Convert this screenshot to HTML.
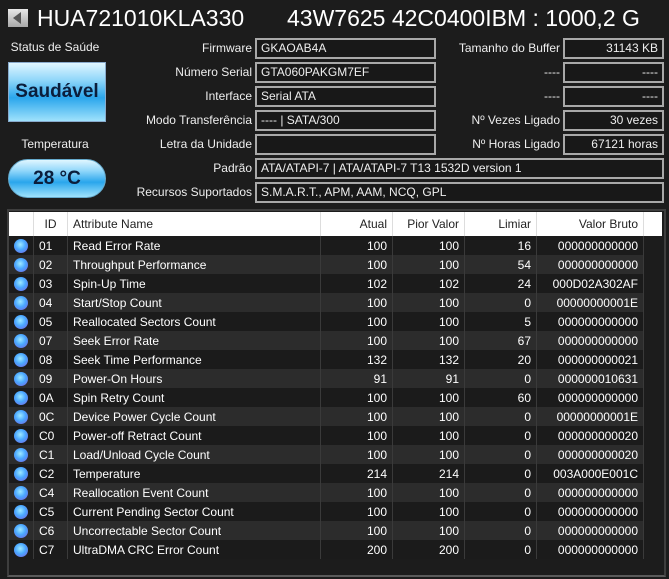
<!DOCTYPE html>
<html><head><meta charset="utf-8"><style>
*{margin:0;padding:0;box-sizing:border-box}
body{width:669px;height:579px;background:#1c1c1c;color:#fff;font-family:"Liberation Sans","DejaVu Sans",sans-serif;font-size:12px;position:relative;overflow:hidden}
.a{position:absolute;white-space:nowrap}
.lbl{position:absolute;text-align:right;color:#eee;font-size:12px}
.box{position:absolute;border:2px solid #a8a8a8;background:#181818;height:21px;line-height:17px;padding:0 4px;font-size:12px;color:#eee;white-space:nowrap}
.r{text-align:right}
table{position:absolute;left:9px;top:212px;border-collapse:collapse;font-size:12px}
td,th{height:19px;padding:0 5px;white-space:nowrap;border-right:1px solid #3a3a3a}
th{height:24px;background:#fff;color:#222;font-weight:normal;border-right:1px solid #ddd}
tr:nth-child(odd) td{background:#1b1b1b}
tr:nth-child(even) td{background:#2c2c2c}
.dot{display:inline-block;width:14px;height:14px;border-radius:50%;background:radial-gradient(circle at 45% 40%,#9ee9ff 0,#4aa8ff 45%,#7a5ce0 100%);vertical-align:middle}
</style></head><body>
<div class="a" style="left:8px;top:9px;width:20px;height:18px;background:linear-gradient(#e8e8e8,#a8a8a8)"></div>
<div class="a" style="left:13px;top:12px;width:0;height:0;border-top:6px solid transparent;border-bottom:6px solid transparent;border-right:8px solid #555"></div>
<div class="a" style="left:37px;top:5px;font-size:23px;color:#fff">HUA721010KLA330</div>
<div class="a" style="left:287px;top:5px;font-size:23px;color:#fff">43W7625 42C0400IBM : 1000,2 G</div>

<div class="a" style="left:0;width:110px;text-align:center;top:40px;color:#eee">Status de Saúde</div>
<div class="a" style="left:8px;top:62px;width:98px;height:60px;border:1px solid #8ac;background:linear-gradient(#e0f6ff 0%,#8fd6fa 30%,#2aa6ec 60%,#9fe2fc 100%);color:#0b1e3c;font-weight:bold;font-size:19px;text-align:center;line-height:58px">Saudável</div>
<div class="a" style="left:0;width:110px;text-align:center;top:137px;color:#eee">Temperatura</div>
<div class="a" style="left:8px;top:159px;width:98px;height:39px;border-radius:20px;border:1px solid #6ac;background:linear-gradient(#e0f6ff 0%,#8fd6fa 30%,#2aa6ec 60%,#9fe2fc 100%);color:#0b1e3c;font-weight:bold;font-size:19px;text-align:center;line-height:38px">28 °C</div>

<div class="lbl" style="left:100px;width:152px;top:41px">Firmware</div>
<div class="lbl" style="left:100px;width:152px;top:65px">Número Serial</div>
<div class="lbl" style="left:100px;width:152px;top:89px">Interface</div>
<div class="lbl" style="left:100px;width:152px;top:113px">Modo Transferência</div>
<div class="lbl" style="left:100px;width:152px;top:137px">Letra da Unidade</div>
<div class="lbl" style="left:100px;width:152px;top:161px">Padrão</div>
<div class="lbl" style="left:100px;width:152px;top:185px">Recursos Suportados</div>

<div class="box" style="left:255px;top:38px;width:181px">GKAOAB4A</div>
<div class="box" style="left:255px;top:62px;width:181px">GTA060PAKGM7EF</div>
<div class="box" style="left:255px;top:86px;width:181px">Serial ATA</div>
<div class="box" style="left:255px;top:110px;width:181px">---- | SATA/300</div>
<div class="box" style="left:255px;top:134px;width:181px"></div>
<div class="box" style="left:255px;top:158px;width:409px">ATA/ATAPI-7 | ATA/ATAPI-7 T13 1532D version 1</div>
<div class="box" style="left:255px;top:182px;width:409px">S.M.A.R.T., APM, AAM, NCQ, GPL</div>

<div class="lbl" style="left:430px;width:130px;top:41px">Tamanho do Buffer</div>
<div class="lbl" style="left:430px;width:130px;top:65px">----</div>
<div class="lbl" style="left:430px;width:130px;top:89px">----</div>
<div class="lbl" style="left:430px;width:130px;top:113px">Nº Vezes Ligado</div>
<div class="lbl" style="left:430px;width:130px;top:137px">Nº Horas Ligado</div>
<div class="box r" style="left:563px;top:38px;width:101px">31143 KB</div>
<div class="box r" style="left:563px;top:62px;width:101px">----</div>
<div class="box r" style="left:563px;top:86px;width:101px">----</div>
<div class="box r" style="left:563px;top:110px;width:101px">30 vezes</div>
<div class="box r" style="left:563px;top:134px;width:101px">67121 horas</div>

<div class="a" style="left:7px;top:209px;width:659px;height:368px;border:2px solid #3e3e3e;border-bottom-color:#5a5a5a"></div>
<div class="a" style="left:9px;top:212px;width:653px;height:24px;background:#fff"></div>
<table>
<tr><th style="width:24px"></th><th style="width:34px;text-align:center">ID</th><th style="width:253px;text-align:left">Attribute Name</th><th style="width:72px;text-align:right">Atual</th><th style="width:72px;text-align:right">Pior Valor</th><th style="width:72px;text-align:right">Limiar</th><th style="width:107px;text-align:right">Valor Bruto</th></tr>
<tbody>
<tr><td><span class="dot"></span></td><td>01</td><td>Read Error Rate</td><td class="r">100</td><td class="r">100</td><td class="r">16</td><td class="r">000000000000</td></tr>
<tr><td><span class="dot"></span></td><td>02</td><td>Throughput Performance</td><td class="r">100</td><td class="r">100</td><td class="r">54</td><td class="r">000000000000</td></tr>
<tr><td><span class="dot"></span></td><td>03</td><td>Spin-Up Time</td><td class="r">102</td><td class="r">102</td><td class="r">24</td><td class="r">000D02A302AF</td></tr>
<tr><td><span class="dot"></span></td><td>04</td><td>Start/Stop Count</td><td class="r">100</td><td class="r">100</td><td class="r">0</td><td class="r">00000000001E</td></tr>
<tr><td><span class="dot"></span></td><td>05</td><td>Reallocated Sectors Count</td><td class="r">100</td><td class="r">100</td><td class="r">5</td><td class="r">000000000000</td></tr>
<tr><td><span class="dot"></span></td><td>07</td><td>Seek Error Rate</td><td class="r">100</td><td class="r">100</td><td class="r">67</td><td class="r">000000000000</td></tr>
<tr><td><span class="dot"></span></td><td>08</td><td>Seek Time Performance</td><td class="r">132</td><td class="r">132</td><td class="r">20</td><td class="r">000000000021</td></tr>
<tr><td><span class="dot"></span></td><td>09</td><td>Power-On Hours</td><td class="r">91</td><td class="r">91</td><td class="r">0</td><td class="r">000000010631</td></tr>
<tr><td><span class="dot"></span></td><td>0A</td><td>Spin Retry Count</td><td class="r">100</td><td class="r">100</td><td class="r">60</td><td class="r">000000000000</td></tr>
<tr><td><span class="dot"></span></td><td>0C</td><td>Device Power Cycle Count</td><td class="r">100</td><td class="r">100</td><td class="r">0</td><td class="r">00000000001E</td></tr>
<tr><td><span class="dot"></span></td><td>C0</td><td>Power-off Retract Count</td><td class="r">100</td><td class="r">100</td><td class="r">0</td><td class="r">000000000020</td></tr>
<tr><td><span class="dot"></span></td><td>C1</td><td>Load/Unload Cycle Count</td><td class="r">100</td><td class="r">100</td><td class="r">0</td><td class="r">000000000020</td></tr>
<tr><td><span class="dot"></span></td><td>C2</td><td>Temperature</td><td class="r">214</td><td class="r">214</td><td class="r">0</td><td class="r">003A000E001C</td></tr>
<tr><td><span class="dot"></span></td><td>C4</td><td>Reallocation Event Count</td><td class="r">100</td><td class="r">100</td><td class="r">0</td><td class="r">000000000000</td></tr>
<tr><td><span class="dot"></span></td><td>C5</td><td>Current Pending Sector Count</td><td class="r">100</td><td class="r">100</td><td class="r">0</td><td class="r">000000000000</td></tr>
<tr><td><span class="dot"></span></td><td>C6</td><td>Uncorrectable Sector Count</td><td class="r">100</td><td class="r">100</td><td class="r">0</td><td class="r">000000000000</td></tr>
<tr><td><span class="dot"></span></td><td>C7</td><td>UltraDMA CRC Error Count</td><td class="r">200</td><td class="r">200</td><td class="r">0</td><td class="r">000000000000</td></tr>
</tbody></table>
</body></html>
